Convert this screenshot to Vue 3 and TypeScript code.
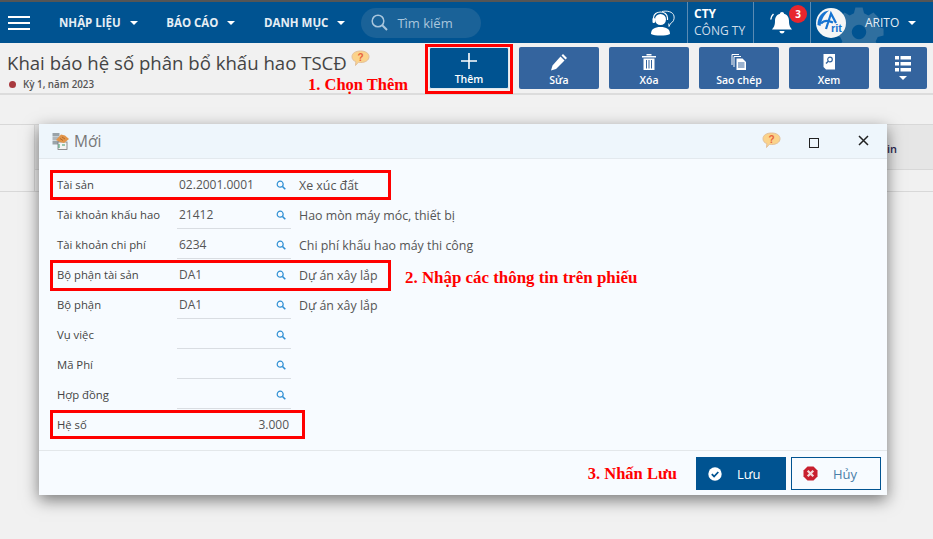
<template>
  <div class="page">
    <div class="strip"></div>
    <header class="nav">
      <div class="burger"><i></i><i></i><i></i></div>
      <div v-for="m in menus" :key="m" class="menu">{{ m }}<span class="caret"></span></div>
      <div class="search">
        <svg width="18" height="18" viewBox="0 0 18 18" fill="none" stroke="#a9c6dd" stroke-width="1.5">
          <circle cx="7" cy="7" r="5.8" />
          <path d="M11.300 11.300 16 16" stroke-width="2" />
        </svg>
        <span>Tìm kiếm</span>
      </div>
      <div class="nav-right">
        <svg class="agent" width="24" height="26" viewBox="0 0 24 26">
          <path d="M11 1.500C16 .5 22 1.500 23 6c.6 3-.5 6-3.500 7.500l-1.500 3-.3-3" fill="none" stroke="#fff" stroke-width=".9" />
          <circle cx="9.500" cy="9.500" r="5.500" fill="#fff" />
          <path d="M2.500 10V8c0-8 14-8 14 0v2" fill="none" stroke="#fff" stroke-width="1.200" />
          <rect x="1.500" y="8" width="2.500" height="5" rx="1" fill="#fff" />
          <path d="M3 13.500c1 2 4 2.500 7 2" fill="none" stroke="#005391" stroke-width="1" />
          <path d="M0 24c0-5 3.500-7 9.500-7s9.500 2 9.500 7c-4 2-15 2-19 0z" fill="#fff" />
        </svg>
        <div class="company">
          <b>CTY</b>
          <span>CÔNG TY</span>
        </div>
        <div class="bell-box">
          <svg width="26" height="26" viewBox="0 0 26 26" fill="#fff">
            <path d="M13 2c1.200 0 2 .8 2 1.800 3.500 1 5 4 5 7.200 0 5 1.500 6.500 3 8.500H3c1.500-2 3-3.500 3-8.500 0-3.200 1.500-6.200 5-7.200C11 2.800 11.800 2 13 2z" />
            <path d="M10.500 21h5c0 1.500-1 2.500-2.500 2.500S10.500 22.500 10.500 21z" />
            <path d="M4.500 4C2.800 5.500 2 7.500 1.800 9.500M21.500 4c1.700 1.500 2.500 3.500 2.700 5.500" fill="none" stroke="#fff" stroke-width="1.500" />
          </svg>
          <span class="badge">3</span>
        </div>
        <div class="user">
          <svg class="gear" width="52" height="52" viewBox="-6 2 72 72">
            <path fill="#2f6f9f" fill-rule="evenodd" d="M25 4h10l2 8 6 3 7-4 7 7-4 7 3 6 8 2v10l-8 2-3 6 4 7-7 7-7-4-6 3-2 8H25l-2-8-6-3-7 4-7-7 4-7-3-6-8-2V33l8-2 3-6-4-7 7-7 7 4 6-3zM30 28a10 10 0 1 0 .01 0z" />
          </svg>
          <svg class="logo" width="30" height="30" viewBox="0 0 30 30">
            <circle cx="15" cy="15" r="15" fill="#f6f6f6" />
            <path d="M1.500 17C1.500 9 6 3 13.500 2.500 9 5 5.500 11 4.500 18z" fill="#1673d1" />
            <path d="M5 15.500C8 12 12 12 17 14.500M10 21 15 5.500 20 15" fill="none" stroke="#1673d1" stroke-width="2.200" />
            <text x="15" y="24" font-family="Liberation Sans, sans-serif" font-size="11" font-weight="700" fill="#1673d1">rit</text>
          </svg>
          <span class="user-name">ARITO</span>
          <span class="caret"></span>
        </div>
      </div>
    </header>

    <section class="toolbar">
      <div class="heading">
        <h1>Khai báo hệ số phân bổ khấu hao TSCĐ<svg class="help" width="19" height="17" viewBox="0 0 19 17"><use href="#bubble" /></svg></h1>
        <p><i class="dot"></i>Kỳ 1, năm 2023</p>
      </div>
      <div class="actions">
        <button class="act primary">
          <svg width="18" height="18" viewBox="0 0 18 18" stroke="#fff" stroke-width="1.600"><path d="M9 1v16M1 9h16" /></svg>
          <span>Thêm</span>
        </button>
        <button class="act">
          <svg width="18" height="18" viewBox="0 0 18 18" fill="#fff"><path d="M13 1l4 4-1.500 1.500-4-4zM10.500 3.500l4 4L6 16l-5 1.500L2.500 12.500z" /></svg>
          <span>Sửa</span>
        </button>
        <button class="act">
          <svg width="16" height="18" viewBox="0 0 16 18" fill="#fff"><path d="M1 3h14v1.500H1zM5.500 1h5v1.500h-5zM2.500 5.500h11V17h-11zM5 7v8.500h1V7zM7.500 7v8.500h1V7zM10 7v8.500h1V7z" fill-rule="evenodd" /></svg>
          <span>Xóa</span>
        </button>
        <button class="act">
          <svg width="17" height="18" viewBox="0 0 17 18" fill="none" stroke="#fff"><path d="M1 12V1.500h7" /><path d="M3 14V3.500h7" /><path d="M5.500 5.500h6l3.500 3.500v8H5.500z" fill="#fff" stroke="none" /><path d="M7 10h6.500M7 12h6.500M7 14h6.500" stroke="#34649e" /></svg>
          <span>Sao chép</span>
        </button>
        <button class="act">
          <svg width="14" height="18" viewBox="0 0 14 18"><path d="M1.500 1H13v15.500H4l-2.500-2.500z" fill="#fff" /><circle cx="8" cy="6.500" r="2.300" fill="none" stroke="#34649e" stroke-width="1.200" /><path d="M6.300 8.300 4 10.500" stroke="#34649e" stroke-width="1.400" /></svg>
          <span>Xem</span>
        </button>
        <button class="act more">
          <svg width="16" height="25" viewBox="0 0 16 25" fill="#fff"><path d="M0 0h4v3.500H0zM5.500 0H16v3.500H5.500zM0 6h4v3.500H0zM5.500 6H16v3.500H5.500zM0 12h4v3.500H0zM5.500 12H16v3.500H5.500zM4 20h8l-4 4z" /></svg>
        </button>
      </div>
      <div class="mark mark-add"></div>
      <div class="note note-1">1. Chọn Thêm</div>
    </section>

    <div class="gap"></div>
    <div class="grid">
      <div class="grid-side"></div>
      <div class="grid-main">
        <div class="grid-head"><span>in</span></div>
        <div class="grid-row"></div>
      </div>
    </div>

    <div class="dialog">
      <div class="dlg-head">
        <svg width="18" height="18" viewBox="0 0 18 18">
          <rect x=".5" y="1" width="7" height="3.500" fill="#9aa3a8" />
          <rect x=".5" y="5" width="7" height="3.500" fill="#b0b6ba" />
          <rect x=".5" y="9" width="7" height="3.500" fill="#9aa3a8" />
          <rect x="6" y="10" width="9" height="7.500" fill="#f4f4f4" stroke="#777" stroke-width=".8" />
          <path d="M6 13h2M10 13h3M6 15h2" stroke="#3a9a6a" stroke-width="1" />
          <path d="M4 8l5-5.500 4 1 4 3.500-5 4-4-1z" fill="#e2954a" />
          <path d="M8 6.500l3 2M10 5l3 2" stroke="#a85f22" stroke-width=".8" />
        </svg>
        <span class="dlg-title">Mới</span>
        <svg class="help dlg-help" width="19" height="17" viewBox="0 0 19 17">
          <defs>
            <g id="bubble">
              <path d="M9.500 1C14.500 1 18 3.200 18 6.700s-3.500 5.800-8.500 5.800c-.8 0-1.500 0-2.200-.2L4.500 15.500l.4-3.900C2.300 10.800 1 9 1 6.700 1 3.200 4.500 1 9.500 1z" fill="#fbd38a" stroke="#e3c09a" />
              <text x="9.500" y="10.500" text-anchor="middle" font-family="Liberation Sans, sans-serif" font-weight="700" font-size="10" fill="#e8643c">?</text>
            </g>
          </defs>
          <use href="#bubble" />
        </svg>
        <span class="maximize"></span>
        <svg class="close" width="11" height="11" viewBox="0 0 11 11" stroke="#222" stroke-width="1.500"><path d="M1 1l9 9M10 1l-9 9" /></svg>
      </div>

      <div class="form">
        <div v-for="r in rows" :key="r.label" class="row">
          <label>{{ r.label }}</label>
          <div class="field">
            <span>{{ r.value }}</span>
            <svg width="10" height="10" viewBox="0 0 10 10" fill="none" stroke="#2f8fd3" stroke-width="1.200">
              <circle cx="4.200" cy="4.200" r="3" />
              <path d="M6.500 6.500 9.300 9.300" stroke-width="1.600" />
            </svg>
          </div>
          <span class="desc">{{ r.desc }}</span>
        </div>
        <div class="row">
          <label>Hệ số</label>
          <div class="field plain">3.000</div>
        </div>
        <div class="mark mark-asset"></div>
        <div class="mark mark-dept"></div>
        <div class="mark mark-ratio"></div>
        <div class="note note-2">2. Nhập các thông tin trên phiếu</div>
      </div>

      <div class="dlg-foot">
        <span class="note-3">3. Nhấn Lưu</span>
        <button class="btn save">
          <svg width="14" height="14" viewBox="0 0 14 14"><circle cx="7" cy="7" r="6.700" fill="#fff" /><path d="M3.800 7.200 6.100 9.500 10.300 5" fill="none" stroke="#005391" stroke-width="1.800" /></svg>
          <span>Lưu</span>
        </button>
        <button class="btn cancel">
          <svg width="15" height="15" viewBox="0 0 15 15"><path d="M4.500.5h6l4 4v6l-4 4h-6l-4-4v-6z" fill="#c8202f" /><path d="M4.700 4.700l5.600 5.600M10.300 4.700l-5.600 5.600" stroke="#f4dcdc" stroke-width="2.200" /></svg>
          <span>Hủy</span>
        </button>
      </div>
    </div>
  </div>
</template>

<script setup lang="ts">
interface FormRow {
  label: string;
  value: string;
  desc: string;
}

const menus: string[] = ['NHẬP LIỆU', 'BÁO CÁO', 'DANH MỤC'];

const rows: FormRow[] = [
  { label: 'Tài sản', value: '02.2001.0001', desc: 'Xe xúc đất' },
  { label: 'Tài khoản khấu hao', value: '21412', desc: 'Hao mòn máy móc, thiết bị' },
  { label: 'Tài khoản chi phí', value: '6234', desc: 'Chi phí khấu hao máy thi công' },
  { label: 'Bộ phận tài sản', value: 'DA1', desc: 'Dự án xây lắp' },
  { label: 'Bộ phận', value: 'DA1', desc: 'Dự án xây lắp' },
  { label: 'Vụ việc', value: '', desc: '' },
  { label: 'Mã Phí', value: '', desc: '' },
  { label: 'Hợp đồng', value: '', desc: '' }
];
</script>

<style>
html,
body {
  margin: 0;
  background: #f1f1f1;
}
</style>

<style scoped>
.page {
  position: relative;
  height: 539px;
  overflow: hidden;
  background: #f1f1f1;
  font-family: "Open Sans", "Noto Sans", sans-serif;
  color: #444;
}

.strip {
  height: 2px;
  background: #555;
}

.nav {
  display: flex;
  align-items: center;
  height: 41px;
  padding-left: 8px;
  background: #005391;
  color: #fff;
  overflow: hidden;
}

.burger {
  display: flex;
  flex-direction: column;
  gap: 4px;
  width: 22px;
  margin-right: 29px;
}

.burger i {
  height: 2px;
  background: #fff;
}

.menu {
  display: flex;
  align-items: center;
  font-size: 11.500px;
  font-weight: 700;
  color: #e6eef5;
  margin-right: 28.500px;
}

.caret {
  width: 0;
  height: 0;
  margin-left: 9px;
  border-left: 4px solid transparent;
  border-right: 4px solid transparent;
  border-top: 4px solid #fff;
}

.search {
  display: flex;
  align-items: center;
  gap: 8px;
  width: 110px;
  height: 30px;
  margin-left: -12.500px;
  padding-left: 10px;
  border-radius: 15px;
  background: #1a6298;
  font-size: 13px;
  color: #a9c6dd;
}

.nav-right {
  display: flex;
  align-items: stretch;
  height: 100%;
  margin-left: auto;
}

.agent {
  align-self: center;
  margin-right: 12px;
}

.company {
  display: flex;
  flex-direction: column;
  justify-content: center;
  width: 67px;
  padding: 0 0 2px 6px;
  box-sizing: border-box;
  border-left: 1px solid #5b8bb3;
  border-right: 1px solid #5b8bb3;
  font-size: 12px;
  line-height: 17px;
}

.company span {
  color: #cfdde9;
}

.bell-box {
  position: relative;
  display: flex;
  align-items: center;
  width: 57px;
  padding-left: 15px;
  box-sizing: border-box;
  border-right: 1px solid #5b8bb3;
}

.badge {
  position: absolute;
  left: 35px;
  top: 3px;
  width: 18px;
  height: 18px;
  border-radius: 50%;
  background: #e8262d;
  font-size: 10px;
  font-weight: 700;
  line-height: 18px;
  text-align: center;
}

.user {
  position: relative;
  display: flex;
  align-items: center;
  width: 122px;
  padding-left: 5px;
  box-sizing: border-box;
}

.gear {
  position: absolute;
  left: 22px;
  top: 4px;
}

.logo {
  position: relative;
}

.user-name {
  position: relative;
  margin-left: 19px;
  font-size: 12px;
  color: #e6eef5;
}

.user .caret {
  position: relative;
}

.toolbar {
  position: relative;
  display: flex;
  justify-content: space-between;
  height: 50px;
  border-bottom: 2px solid #dcdcdc;
}

.heading {
  padding: 7px 0 0 7px;
}

h1 {
  display: flex;
  margin: 0;
  font-size: 18.600px;
  font-weight: 400;
  line-height: 26px;
  color: #444;
  white-space: nowrap;
}

h1 .help {
  margin: 0 0 0 4px;
}

.heading p {
  display: flex;
  align-items: center;
  margin: 2px 0 0;
  font-size: 9.800px;
  font-weight: 600;
  line-height: 13px;
  color: #555;
}

.dot {
  width: 7px;
  height: 7px;
  margin: 0 7px 0 2px;
  border-radius: 50%;
  background: #a93a3f;
}

.actions {
  display: flex;
  gap: 10px;
  padding: 4px 6px 0 0;
}

.act {
  display: flex;
  flex-direction: column;
  align-items: center;
  justify-content: flex-end;
  gap: 2px;
  width: 80px;
  height: 42px;
  padding: 0 0 2px;
  border: 0;
  border-radius: 2px;
  background: #34649e;
  color: #fff;
  font-family: inherit;
  font-size: 10.500px;
  font-weight: 600;
  line-height: 14px;
}

.act svg {
  display: block;
}

.act.primary {
  background: #005391;
  border: 1px solid #dfe8ef;
}

.act.more {
  width: 48px;
  justify-content: center;
  padding: 0;
}

.mark {
  position: absolute;
  box-sizing: border-box;
  border: 3px solid #f00;
  pointer-events: none;
}

.mark-add {
  left: 425px;
  top: 1px;
  width: 88px;
  height: 50px;
}

.note {
  position: absolute;
  font-family: "Liberation Serif", serif;
  font-size: 16.500px;
  font-weight: 700;
  color: #f00;
  white-space: nowrap;
}

.note-1 {
  left: 308px;
  top: 32px;
}

.gap {
  height: 29px;
}

.grid {
  display: flex;
}

.grid-side {
  width: 35px;
  height: 68px;
  box-sizing: border-box;
  border-top: 1px solid #d8d8d8;
  border-right: 1px solid #d8d8d8;
  border-bottom: 1px solid #d8d8d8;
}

.grid-main {
  flex: 1;
}

.grid-head {
  display: flex;
  justify-content: flex-end;
  align-items: center;
  height: 46px;
  padding: 2px 36px 0 0;
  border-top: 1px solid #d8d8d8;
  border-bottom: 1px solid #d8d8d8;
  background: #e6e6e6;
  font-size: 11px;
  font-weight: 600;
  color: #2b2750;
  box-sizing: border-box;
}

.grid-row {
  height: 22px;
  border-bottom: 1px solid #d8d8d8;
  box-sizing: border-box;
}

.dialog {
  position: absolute;
  left: 39px;
  top: 124px;
  display: flex;
  flex-direction: column;
  width: 848px;
  height: 371px;
  background: #f7fbff;
  box-shadow: 0 5px 15px rgba(0, 0, 0, 0.5);
}

.dlg-head {
  display: flex;
  align-items: center;
  height: 34px;
  padding: 0 18px 0 13px;
  border-bottom: 1px solid #e3e9ee;
  background: #eef6fc;
}

.dlg-title {
  margin-left: 4px;
  font-size: 15.500px;
  color: #777;
}

.dlg-help {
  margin: 0 0 0 auto;
  transform: translateY(-1px);
}

.maximize {
  width: 8px;
  height: 8px;
  margin: 4px 39px 0 28px;
  border: 1px solid #222;
}

.close {
  margin-top: -1px;
}

.form {
  position: relative;
  flex: 1;
  padding-top: 11px;
  box-sizing: border-box;
}

.row {
  display: flex;
  align-items: stretch;
  height: 30px;
  font-size: 12px;
}

.row label {
  width: 120px;
  margin-left: 18px;
  font-size: 11.300px;
  line-height: 30px;
  color: #444;
  white-space: nowrap;
}

.field {
  display: flex;
  align-items: center;
  justify-content: space-between;
  width: 114px;
  height: 29px;
  padding: 0 5px 0 2px;
  border-bottom: 1px solid #d9dde2;
  box-sizing: border-box;
  color: #555;
}

.field svg {
  margin-top: 2px;
}

.field.plain {
  justify-content: flex-end;
  padding-right: 2px;
  border-bottom: 0;
}

.desc {
  margin-left: 8px;
  font-size: 12.400px;
  line-height: 31px;
  color: #555;
}

.mark-asset {
  left: 11px;
  top: 11px;
  width: 341px;
  height: 30px;
}

.mark-dept {
  left: 11px;
  top: 101px;
  width: 341px;
  height: 31px;
}

.mark-ratio {
  left: 11px;
  top: 251px;
  width: 255px;
  height: 29px;
}

.note-2 {
  left: 366px;
  top: 109px;
  font-size: 16.900px;
}

.dlg-foot {
  display: flex;
  align-items: center;
  justify-content: flex-end;
  height: 45px;
  padding: 1px 6px 0 0;
  border-top: 1px solid #e3e7ea;
  box-sizing: border-box;
}

.note-3 {
  margin-right: 19px;
  font-family: "Liberation Serif", serif;
  font-size: 16.500px;
  font-weight: 700;
  color: #f00;
}

.btn {
  position: relative;
  display: flex;
  align-items: center;
  width: 90px;
  height: 33px;
  padding: 0 0 0 11px;
  border: 1px solid #005391;
  box-sizing: border-box;
  font-family: inherit;
  font-size: 13px;
}

.btn span {
  margin-left: 15px;
}

.save {
  margin-right: 5px;
  background: #005391;
  color: #fff;
}

.cancel {
  background: #f7fbff;
  color: #4a7ea8;
}
</style>
